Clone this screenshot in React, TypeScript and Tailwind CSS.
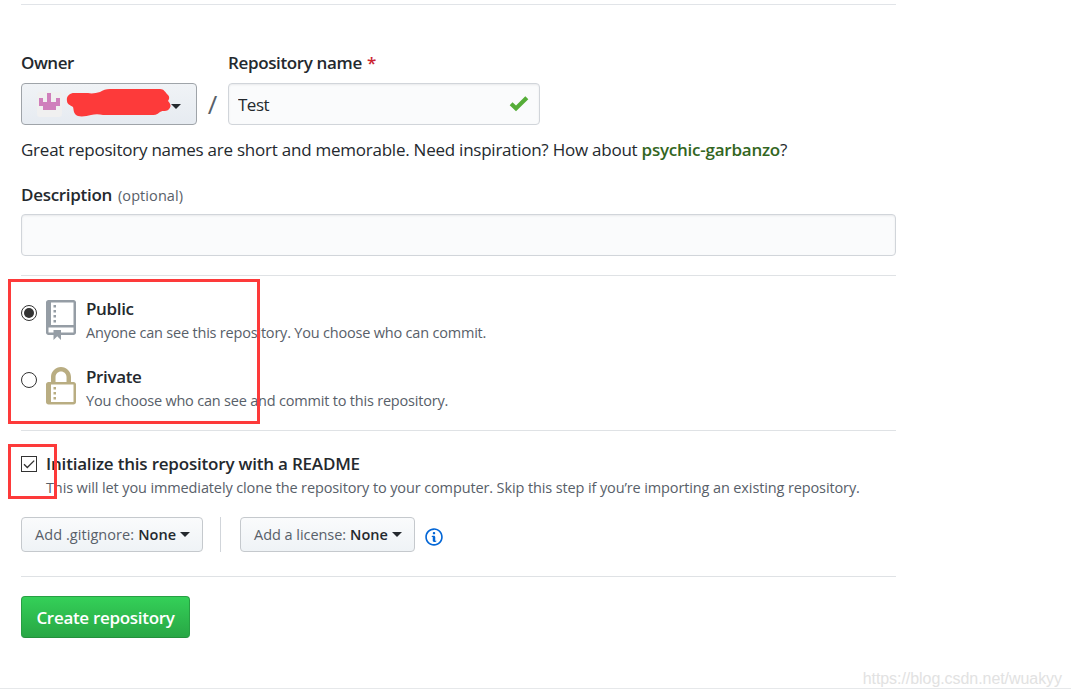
import { useState } from 'react';

const REPO_PATH =
  'M4 9H3V8h1v1zm0-3H3v1h1V6zm0-2H3v1h1V4zm0-2H3v1h1V2zm8-1v12c0 .55-.45 1-1 1H6v2l-1.5-1.5L3 16v-2H1c-.55 0-1-.45-1-1V1c0-.55.45-1 1-1h10c.55 0 1 .45 1 1zm-1 10H1v2h2v-1h3v1h5v-2zm0-10H2v9h9V1z';
const LOCK_PATH =
  'M4 13H3v-1h1v1zm8-6v7c0 .55-.45 1-1 1H1c-.55 0-1-.45-1-1V7c0-.55.45-1 1-1h1V4c0-2.2 1.8-4 4-4s4 1.8 4 4v2h1c.55 0 1 .45 1 1zM3.8 6h4.41V4c0-1.22-.98-2.2-2.2-2.2-1.22 0-2.2.98-2.2 2.2v2H3.8zM11 7H2v7h9V7zM4 8H3v1h1V8zm0 2H3v1h1v-1z';
const INFO_PATH =
  'M6.3 5.69a.942.942 0 0 1-.28-.7c0-.28.09-.52.28-.7.19-.18.42-.28.7-.28.28 0 .52.09.7.28.18.19.28.42.28.7 0 .28-.09.52-.28.7a1 1 0 0 1-.7.3c-.28 0-.52-.11-.7-.3zM8 7.99c-.02-.25-.11-.48-.31-.69-.2-.19-.42-.3-.69-.31H6c-.27.02-.48.13-.69.31-.2.2-.3.44-.31.69h1v3c.02.27.11.5.31.69.2.2.42.31.69.31h1c.27 0 .48-.11.69-.31.2-.19.3-.42.31-.69H8V7.98v.01zM7 2.3c-3.14 0-5.7 2.54-5.7 5.68 0 3.14 2.56 5.7 5.7 5.7s5.7-2.55 5.7-5.7c0-3.15-2.56-5.69-5.7-5.69v.01zM7 .98c3.86 0 7 3.14 7 7s-3.14 7-7 7-7-3.12-7-7 3.14-7 7-7z';

const Caret = () => (
  <svg className="h-[5px] w-[10px] shrink-0" viewBox="0 0 10 5" fill="currentColor">
    <path d="M0 0h10L5 5z" />
  </svg>
);

const Avatar = () => (
  <svg className="h-[25px] w-[25px] shrink-0" viewBox="0 0 25 25">
    <rect width="25" height="25" rx="3" fill="#f0f0f0" />
    <path
      fill="#cf7fbc"
      d="M2 6h4v4h4V1h4v9h5V6h4v8h-4v4H6v-4H2z"
    />
  </svg>
);

interface VisibilityOptionProps {
  title: string;
  note: string;
  checked: boolean;
  onSelect: () => void;
  icon: React.ReactNode;
  markClassName: string;
}

const VisibilityOption: React.FC<VisibilityOptionProps> = ({ title, note, checked, onSelect, icon, markClassName }) => {
  return (
    <label className="flex h-[68px] items-start">
      <input type="radio" name="visibility" checked={checked} onChange={onSelect} className="sr-only" />
      <span className={`flex shrink-0 items-start ${markClassName}`}>
        <span className="mt-[5px] flex h-4 w-4 items-center justify-center rounded-full border border-[#333] bg-white">
          {checked && <span className="h-[10px] w-[10px] rounded-full bg-[#333]" />}
        </span>
        <span className="ml-[9px] w-10">{icon}</span>
      </span>
      <span className="flex flex-col whitespace-nowrap">
        <span className="text-[17px] leading-[26px] font-semibold tracking-[-0.35px]">{title}</span>
        <span className="text-[14.5px] leading-[22px] tracking-[-0.2px] text-[#586069]">{note}</span>
      </span>
    </label>
  );
};

interface SelectButtonProps {
  label: string;
  value: string;
  className: string;
}

const SelectButton: React.FC<SelectButtonProps> = ({ label, value, className }) => (
  <button
    className={`flex h-[35px] items-center rounded-[4px] border border-[#c5c9cd] bg-linear-to-b from-[#fafbfc] to-[#eff3f6] pl-[13px] text-[14.5px] whitespace-nowrap ${className}`}
  >
    <span className="text-[#586069]">{label}</span>
    <span className="mr-[4px] ml-[4px] font-semibold">{value}</span>
    <Caret />
  </button>
);

const App: React.FC = () => {
  const [name, setName] = useState('Test');
  const [description, setDescription] = useState('');
  const [visibility, setVisibility] = useState('public');
  const [withReadme, setWithReadme] = useState(true);

  return (
    <div className="relative h-[697px] w-[1071px] overflow-hidden bg-white font-['Open_Sans','Noto_Sans',sans-serif] text-[#24292e]">
      <div className="flex h-[689px] flex-col border-b border-[#e6e8ea] pt-[4px] pl-[21px]">
        <div className="w-[875px] border-t border-[#e1e4e8]">
          <div className="flex pt-[45px]">
            <div className="w-[176px]">
              <div className="text-[17px] leading-[26px] font-semibold tracking-[-0.45px]">Owner</div>
              <button className="mt-[7px] flex h-[42px] w-[176px] items-center rounded-[4px] border border-[#9fa4a9] bg-linear-to-b from-[#f0f3f6] to-[#e6ebf1] pl-[15px]">
                <Avatar />
                <span className="ml-auto flex pt-[4px] pr-[15px]">
                  <Caret />
                </span>
              </button>
            </div>
            <div className="mt-[33px] w-[31px] text-center text-[26px] leading-[42px] text-[#586069]">/</div>
            <div>
              <div className="text-[17px] leading-[26px] font-semibold tracking-[-0.36px]">
                Repository name <span className="ml-[1px] text-[#cb2431]">*</span>
              </div>
              <div className="mt-[7px] flex h-[42px] w-[312px] items-center rounded-[4px] border border-[#d1d5da] bg-[#fafbfc] pr-[10px] pl-[9px] shadow-[inset_0_1px_2px_rgba(27,31,35,0.075)]">
                <input
                  value={name}
                  onChange={(e) => setName(e.target.value)}
                  className="min-w-0 flex-1 pt-[2px] text-[17px] tracking-[-0.5px] outline-none"
                />
                <svg className="h-5 w-5" viewBox="0 0 20 20" fill="#55ad38">
                  <path d="M0.7 11.2L3.5 8.2 7 11.6 16.3 2.3 19.3 5.2 7 17.2z" />
                </svg>
              </div>
            </div>
          </div>

          <p className="mt-[12px] text-[17px] leading-[26px] tracking-[-0.24px] whitespace-nowrap">
            Great repository names are short and memorable. Need inspiration? How about{' '}
            <strong className="font-semibold text-[#336622]">psychic-garbanzo</strong>?
          </p>

          <div className="mt-[19px] leading-[26px]">
            <span className="text-[17px] font-semibold tracking-[-0.3px]">Description</span>
            <span className="ml-[6px] text-[14.5px] tracking-[0.08px] text-[#586069]">(optional)</span>
          </div>
          <input
            value={description}
            onChange={(e) => setDescription(e.target.value)}
            className="mt-[5px] block h-[42px] w-full rounded-[4px] border border-[#d1d5da] bg-[#fafbfc] px-[10px] shadow-[inset_0_1px_2px_rgba(27,31,35,0.075)] outline-none"
          />

          <div className="mt-[19px] h-[155px] border-t border-[#dfe2e5] pt-[20px]">
            <VisibilityOption
              title="Public"
              note="Anyone can see this repository. You choose who can commit."
              checked={visibility === 'public'}
              onSelect={() => setVisibility('public')}
              markClassName="pt-[4px]"
              icon={
                <svg className="h-10 w-[30px]" viewBox="0 0 12 16" fill="#959da5">
                  <path fillRule="evenodd" d={REPO_PATH} />
                </svg>
              }
            />
            <VisibilityOption
              title="Private"
              note="You choose who can see and commit to this repository."
              checked={visibility === 'private'}
              onSelect={() => setVisibility('private')}
              markClassName="pt-[3px]"
              icon={
                <svg className="h-10 w-[30px]" viewBox="0 0 12 16" fill="#b9ad82">
                  <path fillRule="evenodd" d={LOCK_PATH} />
                </svg>
              }
            />
          </div>

          <div className="h-[146px] border-t border-[#dfe2e5] pt-[20px]">
            <label className="flex items-start">
              <input
                type="checkbox"
                checked={withReadme}
                onChange={() => setWithReadme(!withReadme)}
                className="sr-only"
              />
              <span className="mt-[5px] flex h-4 w-4 shrink-0 items-center justify-center border border-[#333] bg-white">
                {withReadme && (
                  <svg className="h-[14px] w-[14px]" viewBox="0 0 14 14" fill="none" stroke="#333" strokeWidth="1.3">
                    <path d="M2 7.2l3.3 3.3L12.2 3.6" />
                  </svg>
                )}
              </span>
              <span className="ml-[9px] flex flex-col whitespace-nowrap">
                <span className="text-[17px] leading-[26px] font-semibold tracking-[-0.2px]">
                  Initialize this repository with a README
                </span>
                <span className="text-[14.5px] leading-[22px] tracking-[-0.12px] text-[#586069]">
                  This will let you immediately clone the repository to your computer. Skip this step if you’re importing an existing repository.
                </span>
              </span>
            </label>
            <div className="mt-[18px] flex items-center">
              <SelectButton label="Add .gitignore:" value="None" className="w-[182px] tracking-[0.06px]" />
              <div className="mr-[19px] ml-[17px] h-[35px] w-px bg-[#d1d5da]" />
              <SelectButton label="Add a license:" value="None" className="w-[175px] tracking-[-0.04px]" />
              <svg className="mt-[4px] ml-[10px] h-5 w-[18px]" viewBox="0 0 14 16" fill="#0366d6">
                <path fillRule="evenodd" d={INFO_PATH} />
              </svg>
            </div>
          </div>

          <div className="border-t border-[#dfe2e5] pt-[19px]">
            <button className="h-[42px] w-[169px] rounded-[4px] border border-[#279f43] border-b-[#23903c] bg-linear-to-b from-[#34d058] to-[#28a745] pt-[2px] text-[17px] font-semibold tracking-[-0.3px] whitespace-nowrap text-white">
              Create repository
            </button>
          </div>
        </div>
      </div>

      {/* scribble over the account name */}
      <svg className="absolute top-[88px] left-[66px] h-[30px] w-[105px]" viewBox="0 0 105 30" fill="#fd3a3a">
        <path d="M1 13C0 8 4 5 8 5h14c4 1 8 0 12-1 3-2 6-3 10-3h50c4 0 5 3 8 6 2 2 1 5 0 6 2 2 4 5 1 8-2 3-6 1-9 3-3 3-6 3-9 3H37c-4-1-8-1-12 0-4 1-9 2-13 1-5-2-4-6-5-9-3-2-6-3-6-6z" />
      </svg>

      {/* highlight frames */}
      <div className="pointer-events-none absolute top-[279px] left-[8px] h-[145px] w-[252px] border-[3px] border-[#fd3a3a]" />
      <div className="pointer-events-none absolute top-[444px] left-[8px] h-[55px] w-[49px] border-[3px] border-[#fd3a3a]" />

      <div className="absolute right-[9px] bottom-[8px] font-['Liberation_Sans',sans-serif] text-[16px] leading-5 tracking-[-0.06px] whitespace-nowrap text-[#e2e2e2]">
        https://blog.csdn.net/wuakyy
      </div>
    </div>
  );
};

export default App;
